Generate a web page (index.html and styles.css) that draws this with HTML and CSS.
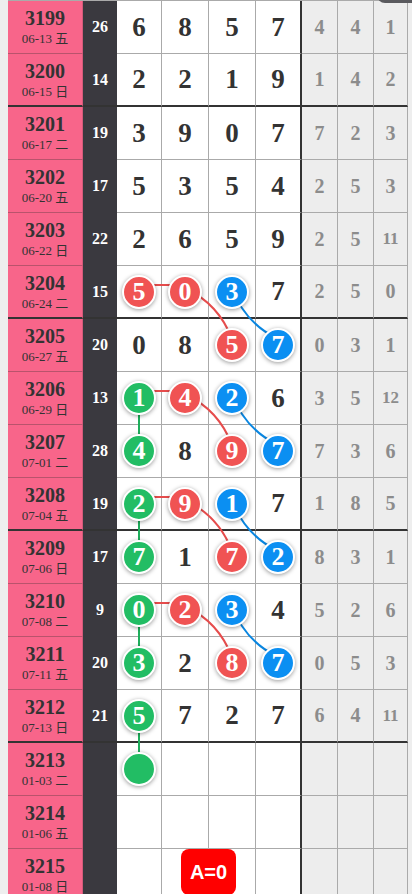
FILE: index.html
```html
<!DOCTYPE html>
<html lang="zh">
<head>
    <meta charset="UTF-8">
    <meta name="viewport" content="width=device-width, initial-scale=1.0">
    <title>走势图</title>
    <link rel="stylesheet" href="styles.css">
</head>
<body>

    <div class="top-tab"></div>

    <div class="board" id="board">
        <svg class="links" id="links" xmlns="http://www.w3.org/2000/svg"></svg>
        <div class="badge">A=0</div>
    </div>

    <script>
        // period, date, sum, digits, misses
        // digit tokens: r5 / b3 / g1 = ball, g = empty ball, . = blank
        const rows = [
            ['3199', '06-13 五', '26', '6 8 5 7', '4 4 1'],
            ['3200', '06-15 日', '14', '2 2 1 9', '1 4 2'],
            ['3201', '06-17 二', '19', '3 9 0 7', '7 2 3'],
            ['3202', '06-20 五', '17', '5 3 5 4', '2 5 3'],
            ['3203', '06-22 日', '22', '2 6 5 9', '2 5 11'],
            ['3204', '06-24 二', '15', 'r5 r0 b3 7', '2 5 0'],
            ['3205', '06-27 五', '20', '0 8 r5 b7', '0 3 1'],
            ['3206', '06-29 日', '13', 'g1 r4 b2 6', '3 5 12'],
            ['3207', '07-01 二', '28', 'g4 8 r9 b7', '7 3 6'],
            ['3208', '07-04 五', '19', 'g2 r9 b1 7', '1 8 5'],
            ['3209', '07-06 日', '17', 'g7 1 r7 b2', '8 3 1'],
            ['3210', '07-08 二', '9', 'g0 r2 b3 4', '5 2 6'],
            ['3211', '07-11 五', '20', 'g3 2 r8 b7', '0 5 3'],
            ['3212', '07-13 日', '21', 'g5 7 2 7', '6 4 11'],
            ['3213', '01-03 二', '', 'g . . .', '. . .'],
            ['3214', '01-06 五', '', '. . . .', '. . .'],
            ['3215', '01-08 日', '', '. . . .', '. . .']
        ];

        // [colour, row, col, row, col]
        const links = [
            ['red', 5, 0, 5, 1], ['red', 5, 1, 6, 2], ['blue', 5, 2, 6, 3],
            ['red', 7, 0, 7, 1], ['red', 7, 1, 8, 2], ['blue', 7, 2, 8, 3], ['green', 7, 0, 8, 0],
            ['red', 9, 0, 9, 1], ['red', 9, 1, 10, 2], ['blue', 9, 2, 10, 3], ['green', 9, 0, 10, 0],
            ['red', 11, 0, 11, 1], ['red', 11, 1, 12, 2], ['blue', 11, 2, 12, 3], ['green', 11, 0, 12, 0],
            ['green', 13, 0, 14, 0]
        ];

        const colourNames = { r: 'red', g: 'green', b: 'blue' };
        const board = document.getElementById('board');

        rows.forEach(function (r, k) {
            const row = document.createElement('div');
            row.className = 'row' + (k % 4 === 1 ? ' group-end' : '');

            let html = `<div class="period"><span class="no">${r[0]}</span><span class="date">${r[1]}</span></div>`;
            html += `<div class="sum">${r[2]}</div>`;

            r[3].split(' ').forEach(function (tok, c) {
                const m = tok.match(/^([rgb])(\d?)$/);
                let inner = '';
                if (m) {
                    inner = `<span class="ball ${colourNames[m[1]]}" data-k="${k}" data-c="${c}">${m[2]}</span>`;
                } else if (tok !== '.') {
                    inner = tok;
                }
                html += `<div class="cell${c === 3 ? ' last' : ''}">${inner}</div>`;
            });

            r[4].split(' ').forEach(function (tok) {
                const text = tok === '.' ? '' : tok;
                html += `<div class="miss${text.length > 1 ? ' wide' : ''}">${text}</div>`;
            });

            row.innerHTML = html;
            board.appendChild(row);
        });

        function centre(k, c) {
            const ball = board.querySelector(`.ball[data-k="${k}"][data-c="${c}"]`);
            return {
                x: ball.offsetLeft + ball.offsetWidth / 2,
                y: ball.offsetTop + ball.offsetHeight / 2
            };
        }

        const svg = document.getElementById('links');
        svg.setAttribute('width', board.offsetWidth);
        svg.setAttribute('height', board.offsetHeight);

        let paths = '';
        links.forEach(function (l) {
            const a = centre(l[1], l[2]);
            const b = centre(l[3], l[4]);
            let d;
            if (a.y === b.y || a.x === b.x) {
                d = `M${a.x} ${a.y - 7} L${b.x} ${b.y - 7}`;
            } else {
                const x1 = a.x, y1 = a.y - 4, x2 = b.x, y2 = b.y - 6;
                const dx = x2 - x1, dy = y2 - y1;
                const len = Math.sqrt(dx * dx + dy * dy);
                const bend = l[0] === 'red' ? 14 : -14;
                const cx = (x1 + x2) / 2 + bend * dy / len;
                const cy = (y1 + y2) / 2 - bend * dx / len;
                d = `M${x1} ${y1} Q${cx} ${cy} ${x2} ${y2}`;
            }
            paths += `<path class="${l[0]}" d="${d}"/>`;
        });
        svg.innerHTML = paths;
    </script>

</body>
</html>
```

FILE: styles.css
```css
html, body {
    margin: 0;
    padding: 0;
}
body {
    position: relative;
    height: 894px;
    overflow: hidden;
    background: #eeeeee;
    font-family: "Liberation Serif", "Noto Sans CJK SC", serif;
    color: #333;
}
.top-tab {
    position: absolute;
    top: -40px;
    right: 0;
    width: 35px;
    height: 43px;
    background: #5a5a5e;
    border-radius: 0 0 0 8px;
    z-index: 5;
}
.board {
    position: relative;
    margin-left: 8px;
    width: 400px;
    border-top: 1px solid #aaa;
}
.row {
    display: grid;
    grid-template-columns: 75px 34px 45px 47px 47px 46px 36px 36px 34px;
    height: 53px;
}
.row > div {
    box-sizing: border-box;
    display: flex;
    align-items: center;
    justify-content: center;
    border-bottom: 1px solid #aaa;
}
.row.group-end > div {
    border-bottom: 2px solid #333;
}
.period {
    flex-direction: column;
    padding-top: 2px;
    background: #f8658a;
    border-right: 1px solid #d45a7a;
}
.row > .period {
    border-bottom-color: #b9536c;
}
.period .no {
    font-size: 20px;
    line-height: 21px;
    font-weight: bold;
}
.period .date {
    font-size: 13px;
    line-height: 19px;
}
.row > .sum {
    background: #3a393f;
    border-bottom-color: #3a393f;
    color: #fff;
    font-size: 16px;
    font-weight: bold;
}
.cell {
    background: #fff;
    border-right: 1px solid #aaa;
    font-size: 27px;
    font-weight: bold;
    color: #333;
}
.cell.last {
    border-right: 2px solid #333;
}
.miss {
    background: #ededed;
    border-right: 1px solid #aaa;
    color: #8c8c8c;
    font-size: 20px;
    font-weight: bold;
}
.miss.wide {
    font-size: 17px;
}
.ball {
    position: relative;
    z-index: 2;
    width: 34px;
    height: 34px;
    box-sizing: border-box;
    border: 2px solid #fff;
    border-radius: 50%;
    display: flex;
    align-items: center;
    justify-content: center;
    color: #fff;
    font-size: 26px;
    line-height: 30px;
    box-shadow: 0 1px 4px rgba(0, 0, 0, 0.4);
}
.ball.red {
    background: #f05353;
}
.ball.blue {
    background: #0b8ff2;
}
.ball.green {
    background: #22bd64;
}
.links {
    position: absolute;
    top: 0;
    left: 0;
    z-index: 1;
    pointer-events: none;
}
.links path {
    fill: none;
    stroke-width: 2;
}
.links path.red {
    stroke: #e64c4c;
}
.links path.blue {
    stroke: #0a86e0;
}
.links path.green {
    stroke: #1fae5c;
}
.badge {
    position: absolute;
    left: 173px;
    top: 848px;
    z-index: 3;
    width: 55px;
    height: 46px;
    box-sizing: border-box;
    padding-top: 12px;
    background: #ff0000;
    border-radius: 8px;
    color: #fff;
    font-family: "Liberation Sans", Arial, sans-serif;
    font-size: 20px;
    font-weight: bold;
    text-align: center;
}
```
